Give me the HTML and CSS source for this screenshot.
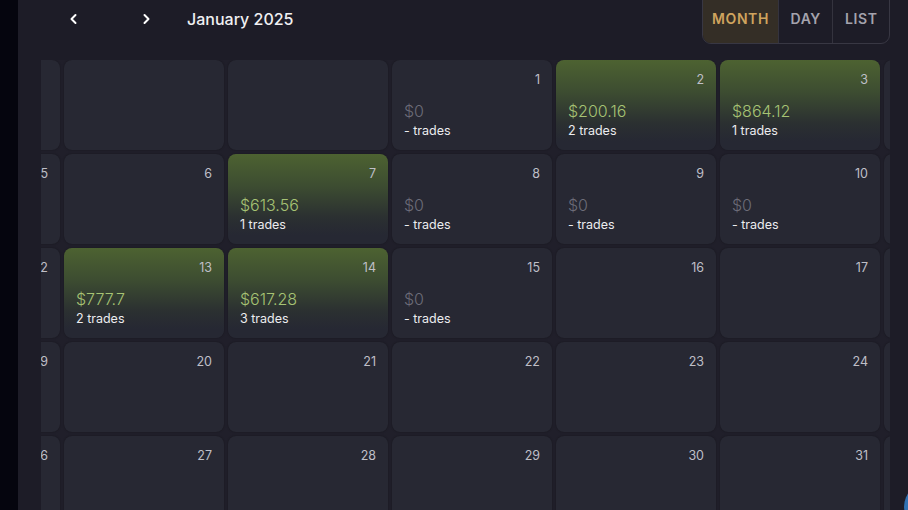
FILE: index.html
```html
<!DOCTYPE html>
<html lang="en">
<head>
  <meta charset="UTF-8">
  <meta name="viewport" content="width=device-width, initial-scale=1.0">
  <title>Trade Calendar</title>
  <link rel="stylesheet" href="styles.css">
</head>
<body>
  <aside class="sidebar"></aside>

  <main class="main">
    <header class="toolbar">
      <div class="nav">
        <button class="nav-btn" aria-label="Previous month">
          <svg width="12" height="12" viewBox="0 0 12 12"><path d="M7.5 2 L3.5 6 L7.5 10" fill="none" stroke="#fff" stroke-width="2" stroke-linecap="round" stroke-linejoin="round"/></svg>
        </button>
        <button class="nav-btn" aria-label="Next month">
          <svg width="12" height="12" viewBox="0 0 12 12"><path d="M4.5 2 L8.5 6 L4.5 10" fill="none" stroke="#fff" stroke-width="2" stroke-linecap="round" stroke-linejoin="round"/></svg>
        </button>
        <h1 class="title">January 2025</h1>
      </div>
      <div class="views">
        <button class="view active">Month</button>
        <button class="view">Day</button>
        <button class="view">List</button>
      </div>
    </header>

    <section class="viewport">
      <div class="grid" id="grid"></div>
    </section>
  </main>

  <div class="fab"></div>

  <script>
    const trades = {
      1: { pnl: 0, count: null },
      2: { pnl: 200.16, count: 2 },
      3: { pnl: 864.12, count: 1 },
      7: { pnl: 613.56, count: 1 },
      8: { pnl: 0, count: null },
      9: { pnl: 0, count: null },
      10: { pnl: 0, count: null },
      13: { pnl: 777.7, count: 2 },
      14: { pnl: 617.28, count: 3 },
      15: { pnl: 0, count: null }
    };

    const grid = document.getElementById('grid');
    const firstDay = 3; // Jan 1 2025 is a Wednesday
    let html = '';

    for (let i = 0; i < 35; i++) {
      const day = i - firstDay + 1;
      if (day < 1 || day > 31) {
        html += '<div class="cell empty"></div>';
        continue;
      }
      const t = trades[day];
      let body = '';
      let cls = 'cell';
      if (t) {
        const win = t.pnl > 0;
        if (win) cls += ' win';
        body = `<div class="pnl ${win ? 'up' : 'flat'}">$${t.pnl}</div>
                <div class="count">${t.count ? t.count : '-'} trades</div>`;
      }
      html += `<div class="${cls}"><span class="day">${day}</span>${body}</div>`;
    }

    grid.innerHTML = html;
  </script>
</body>
</html>
```

FILE: styles.css
```css
* { box-sizing: border-box; }
body {
  margin: 0; height: 510px; overflow: hidden;
  display: flex; background: #05050e;
  font-family: Inter, "Noto Sans", sans-serif; color: #e6e6ea;
}
.sidebar { width: 18px; flex-shrink: 0; background: #05050e; }
.main { flex: 1; background: #1d1c27; min-width: 0; }

.toolbar {
  height: 44px; display: flex; align-items: flex-start;
  justify-content: space-between; padding-right: 18px;
}
.nav { display: flex; align-items: center; height: 38px; padding-left: 47px; }
.nav-btn {
  width: 18px; height: 18px; padding: 0; border: none; background: none;
  display: flex; align-items: center; justify-content: center; cursor: pointer;
}
.nav-btn + .nav-btn { margin-left: 54px; }
.title { margin: 0 0 0 32px; font-size: 16px; font-weight: 500; color: #f0f0f2; }

.views {
  display: flex; margin-top: -1px; height: 45px;
  border: 1px solid #383743; border-radius: 0 0 9px 9px; overflow: hidden;
}
.view {
  border: none; background: none; padding: 0 11.5px 6px;
  font-family: inherit; font-size: 14px; font-weight: 600; letter-spacing: 0.6px;
  text-transform: uppercase; color: #a4a3ad; cursor: pointer;
}
.view + .view { border-left: 1px solid #34333e; }
.view.active { background: #342e26; color: #cfa45e; padding: 0 9px 6px; }

.viewport {
  margin: 16px 0 0 23px; width: 849px; height: 450px;
  overflow: hidden; background: #201f2a;
}
.grid {
  display: grid; grid-template-columns: repeat(7, 160px);
  grid-auto-rows: 90px; gap: 4px; margin-left: -141px; width: 1144px;
}
.cell {
  position: relative; border-radius: 8px; background: #272833;
  padding: 12px 12px 0; display: flex; flex-direction: column;
  box-shadow: 0 0 2px rgba(0,0,0,0.35);
}
.cell.win {
  background: linear-gradient(180deg, #4d6231 0%, #3d4d31 35%, #2b3031 70%, #262833 90%);
}
.day {
  align-self: flex-end; font-size: 12.5px; line-height: 15px; color: #bfbfc7;
}
.pnl { margin-top: 14px; font-size: 16px; line-height: 20px; font-weight: 300; }
.pnl.up { color: #a6c374; }
.pnl.flat { color: #6c6c78; }
.count { font-size: 12.5px; line-height: 16px; color: #ececef; margin-top: 2px; }

.fab {
  position: fixed; right: -46px; bottom: -22px;
  width: 50px; height: 50px; border-radius: 50%; background: #3172b3;
}
```
